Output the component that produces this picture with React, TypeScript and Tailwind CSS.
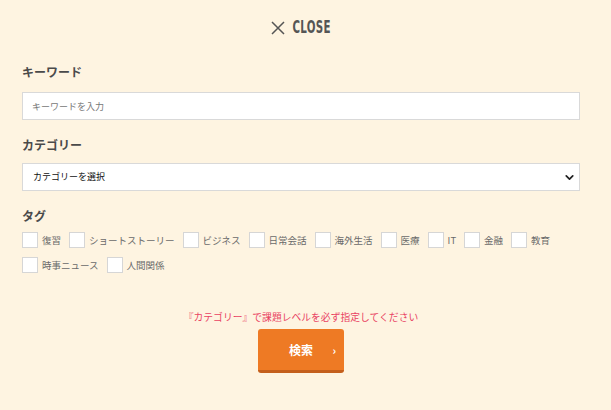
import { ChevronDown } from "lucide-react";

const tags = [
  "復習",
  "ショートストーリー",
  "ビジネス",
  "日常会話",
  "海外生活",
  "医療",
  "IT",
  "金融",
  "教育",
  "時事ニュース",
  "人間関係",
];

const font = "font-['Noto_Sans_CJK_JP','Noto_Sans',sans-serif]";

export default function App() {
  return (
    <div className={`min-h-[410px] w-full bg-[#fef4e1] ${font}`}>
      <div className="w-[602px]">
        <div className="flex items-center justify-center gap-[7px] pt-[15px] text-[#555]">
          <svg width="14" height="14" viewBox="0 0 14 14" className="mt-[1px]">
            <path d="M1 1L13 13M13 1L1 13" stroke="#555" strokeWidth="1.5" />
          </svg>
          <span className="mx-[-14px] inline-block scale-x-[0.57] font-['DejaVu_Sans',sans-serif] text-[18px] font-bold leading-[24px] tracking-[0.5px]">
            CLOSE
          </span>
        </div>

        <div className="ml-[22px] w-[558px]">
          <h3 className="mt-[24px] text-[12px] font-bold leading-[18px] text-[#4a4a4a]">キーワード</h3>
          <input
            placeholder="キーワードを入力"
            className="mt-[11px] block h-[28px] w-full border border-[#d9d9d9] bg-white px-[9px] text-[9px] text-[#333] outline-none placeholder:text-[#777]"
          />

          <h3 className="mt-[16px] text-[12px] font-bold leading-[18px] text-[#4a4a4a]">カテゴリー</h3>
          <div className="relative mt-[9px] flex h-[28px] w-full items-center border border-[#d9d9d9] bg-white pl-[10px] text-[9px] text-[#111]">
            カテゴリーを選択
            <ChevronDown className="absolute right-[3px] top-[7px] h-[13px] w-[13px] text-[#222]" strokeWidth={3.2} />
          </div>

          <h3 className="mt-[16px] text-[12px] font-bold leading-[18px] text-[#4a4a4a]">タグ</h3>
          <div className="mt-[7px] flex w-[540px] flex-wrap gap-x-[8px] gap-y-[9px]">
            {tags.map((t) => (
              <label key={t} className="flex h-[16px] items-center gap-[4px]">
                <span className="block h-[16px] w-[16px] border border-[#d6d6d6] bg-white" />
                <span className="text-[9.5px] leading-[16px] text-[#6a6a6a]">{t}</span>
              </label>
            ))}
          </div>
        </div>

        <p className="mt-[37px] text-center text-[9.8px] leading-[14px] text-[#e94262]">
          『カテゴリー』で課題レベルを必ず指定してください
        </p>
        <div className="mt-[5px] flex justify-center">
          <button className="relative h-[44px] w-[86px] rounded-[3px] border-b-[3px] border-[#c45f1c] bg-[#ee7a24] text-[12px] font-bold text-white">
            検索
            <span className="absolute right-[8px] top-[13px] text-[11px] font-bold">›</span>
          </button>
        </div>
      </div>
    </div>
  );
}
